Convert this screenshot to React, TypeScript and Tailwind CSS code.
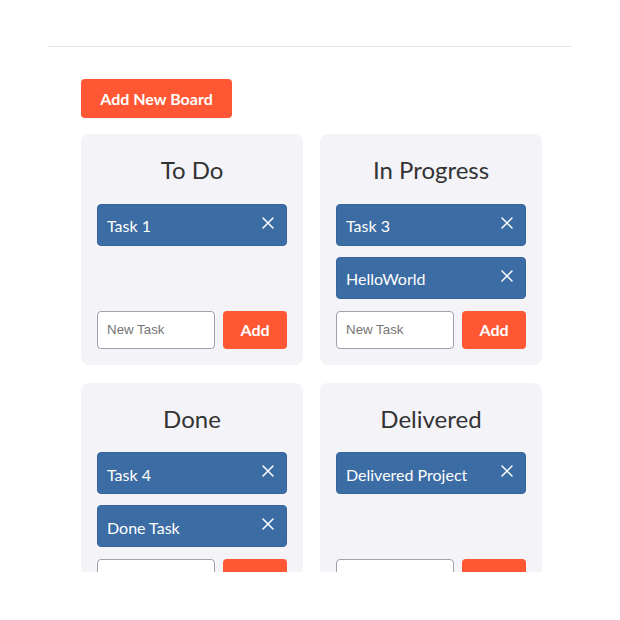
import React from "react";

const boards = [
  { title: "To Do", tasks: ["Task 1"] },
  { title: "In Progress", tasks: ["Task 3", "HelloWorld"] },
  { title: "Done", tasks: ["Task 4", "Done Task"] },
  { title: "Delivered", tasks: ["Delivered Project"] },
];

function CloseIcon() {
  return (
    <svg width="12" height="12" viewBox="0 0 12 12" fill="none">
      <path d="M1 1L11 11M11 1L1 11" stroke="white" strokeWidth="1.5" strokeLinecap="round" />
    </svg>
  );
}

function Board({ title, tasks }: { title: string; tasks: string[] }) {
  return (
    <div className="flex flex-col rounded-[8px] bg-[#f4f4f8] px-4 pb-4 pt-[20px]">
      <h2 className="text-center text-[24px] leading-[32px] text-[#333333]">{title}</h2>
      <div className="mt-[17.5px] flex flex-col gap-[11px]">
        {tasks.map((t) => (
          <div
            key={t}
            className="flex h-[42px] items-center justify-between rounded-[4px] border border-[#35659a] bg-[#3b6ca3] pl-[9px] pr-[12px] text-[16px] text-white"
          >
            <span className="pt-[3px]">{t}</span>
            <span className="-mt-[4px]">
              <CloseIcon />
            </span>
          </div>
        ))}
      </div>
      <div className="mt-auto flex gap-2 pt-[12px]">
        <input
          placeholder="New Task"
          className="h-[38px] w-[118px] rounded-[4px] border border-[#9ca3af] bg-white px-[9px] text-[13.33px] text-[#333] placeholder:text-[#757575]"
          style={{ fontFamily: '"Liberation Sans", Arial, sans-serif' }}
        />
        <button className="h-[38px] w-[64px] rounded-[4px] bg-[#ff5733] text-[16px] font-bold text-white">
          Add
        </button>
      </div>
    </div>
  );
}

export default function App() {
  return (
    <div className="h-[620px] w-[620px] bg-white" style={{ fontFamily: '"Segoe UI", Lato, "Noto Sans", sans-serif' }}>
      <div className="pt-[46px]">
        <div className="mx-[48px] h-[526px] overflow-hidden border-t border-[#e5e7eb] pl-[33px] pt-[32px]">
          <button className="flex h-[39px] w-[151px] items-center justify-center rounded-[4px] bg-[#ff5733] text-[16px] font-bold text-white">
            Add New Board
          </button>
          <div className="mt-[16px] grid grid-cols-[222px_222px] gap-x-[17px] gap-y-[18px]">
            {boards.map((b) => (
              <Board key={b.title} title={b.title} tasks={b.tasks} />
            ))}
          </div>
        </div>
      </div>
    </div>
  );
}
